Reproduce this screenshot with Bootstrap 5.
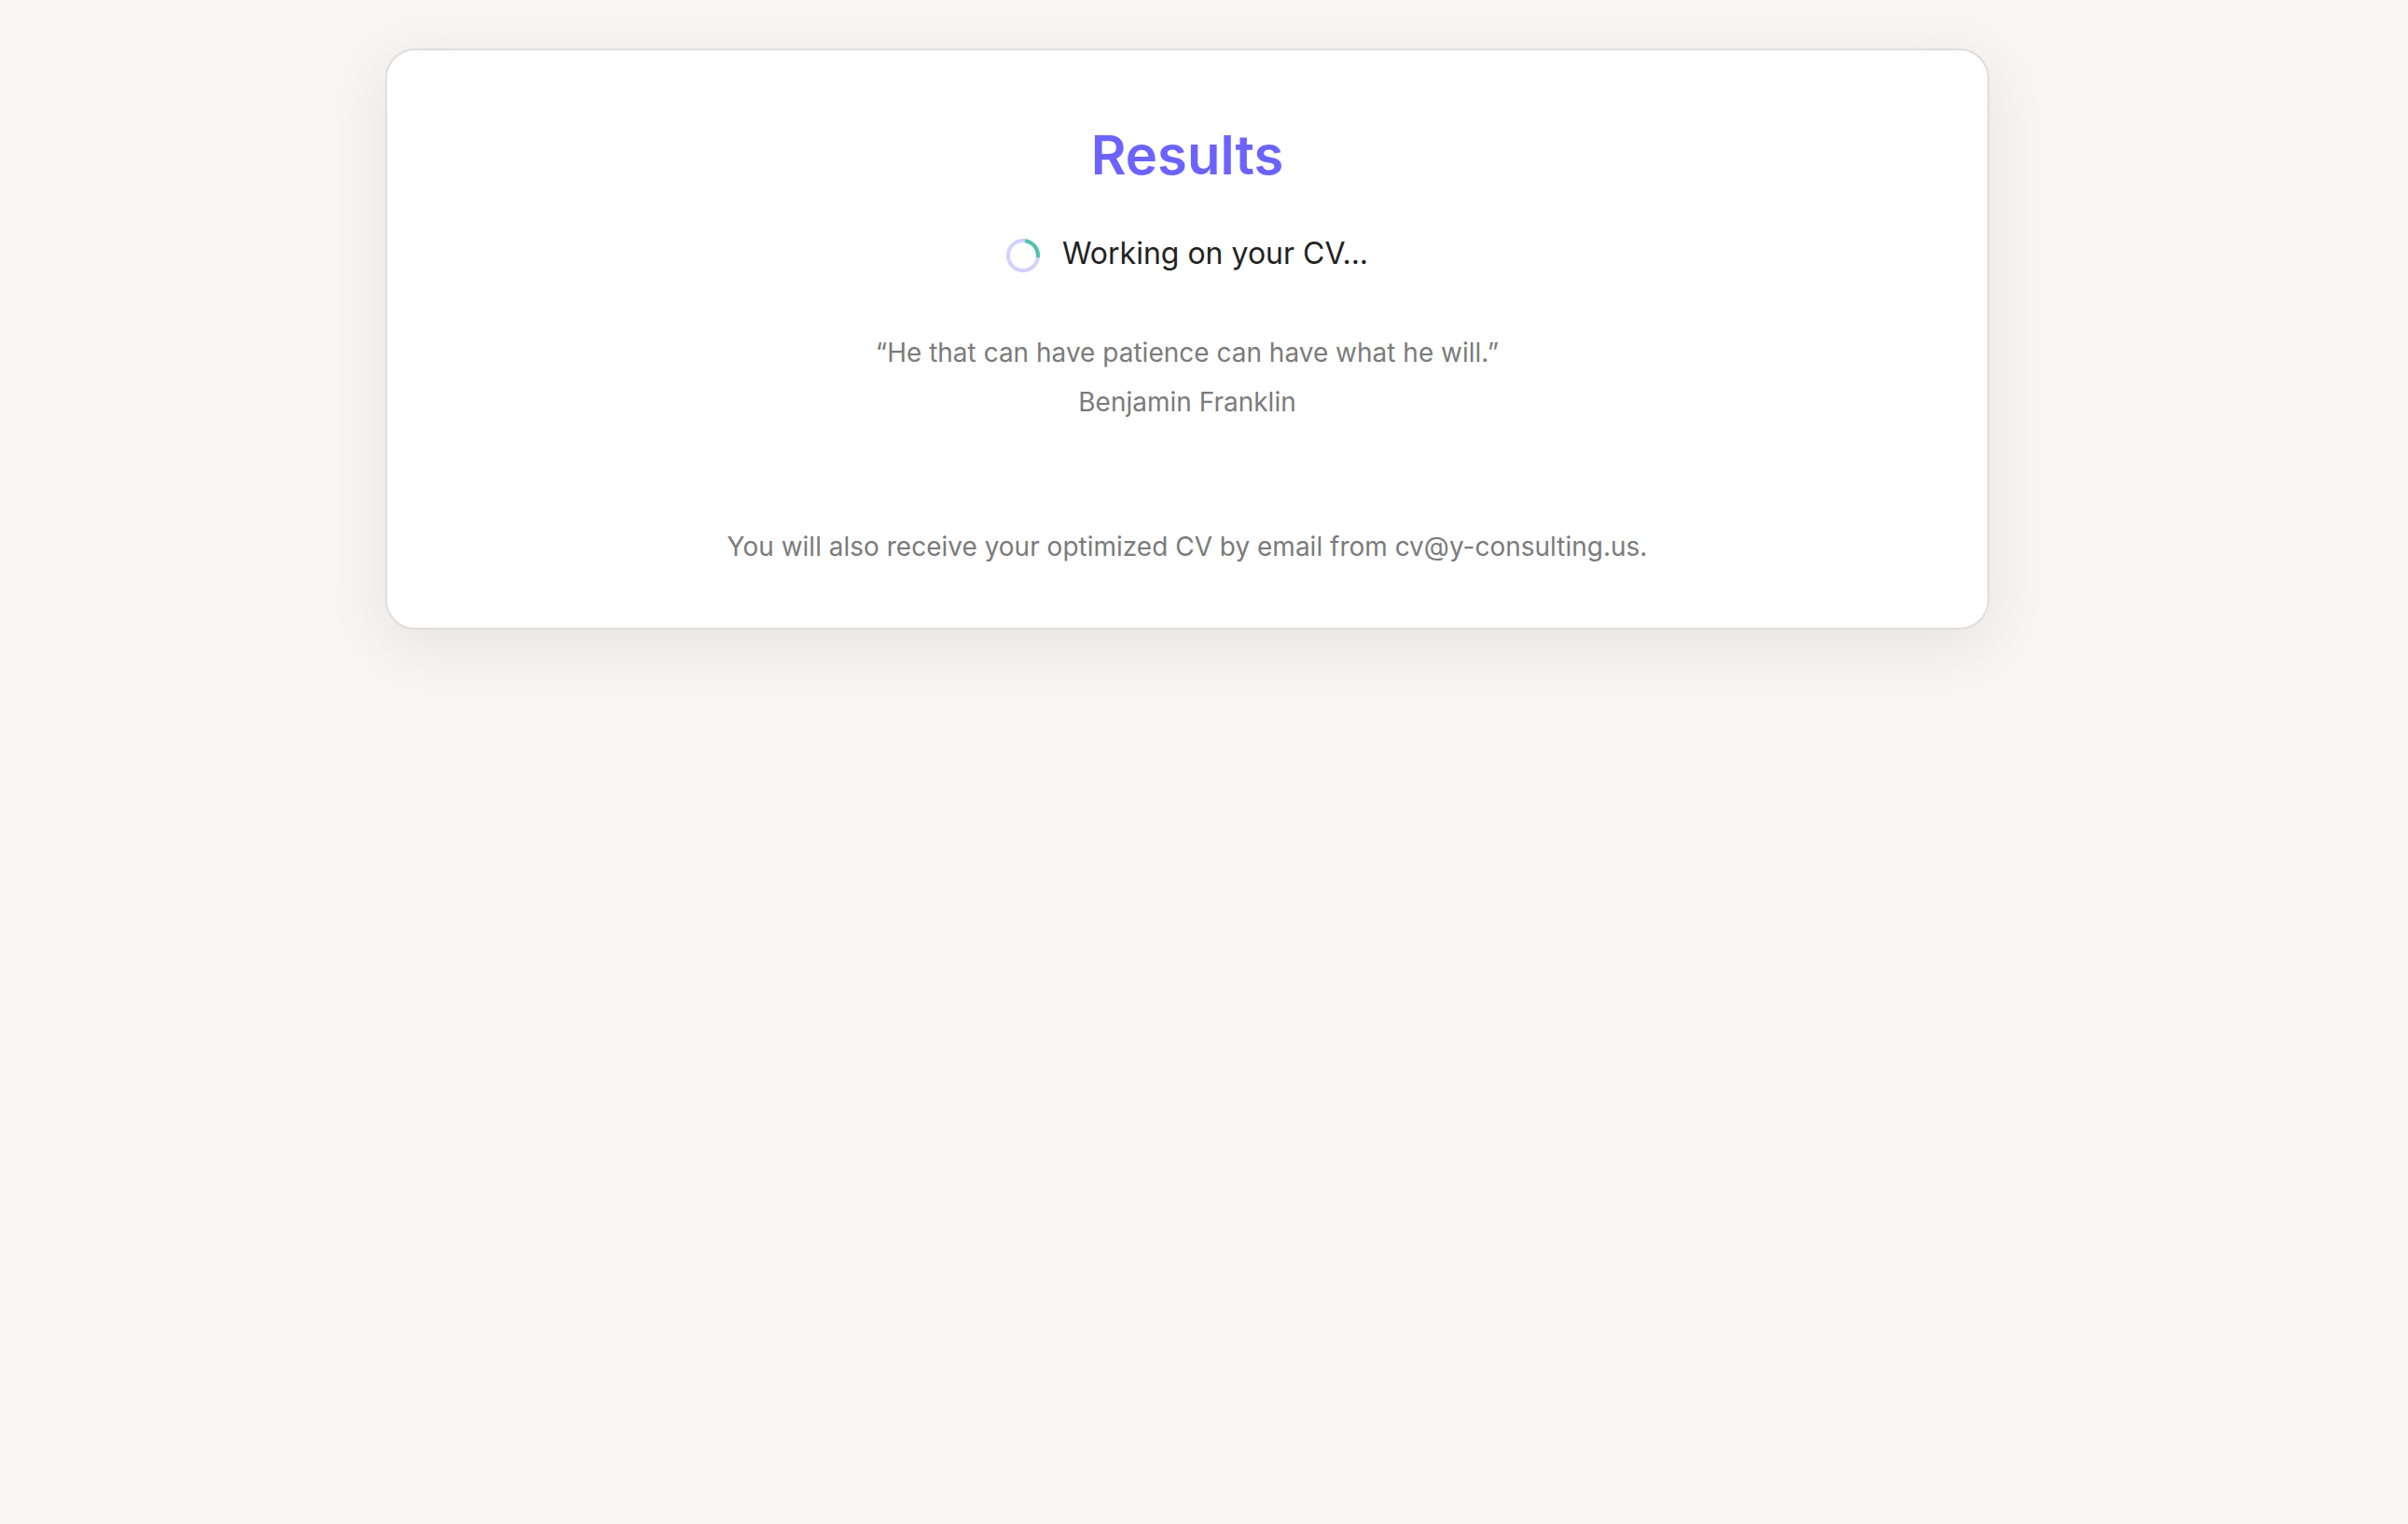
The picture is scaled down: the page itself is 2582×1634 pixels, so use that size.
<!DOCTYPE html>
<html lang="en">
<head>
<meta charset="utf-8">
<meta name="viewport" content="width=device-width, initial-scale=1">
<title>Results</title>
<link href="https://cdn.jsdelivr.net/npm/bootstrap@5.3.0/dist/css/bootstrap.min.css" rel="stylesheet">
<style>
  body {
    background: #f9f5f2;
    color: #222;
    font-family: Inter, "Liberation Sans", sans-serif;
    font-size: 28px;
    line-height: 53px;
    padding: 52px 36px 52px 0;
  }
  .results-card {
    max-width: 1720px;
    padding: 76px 64px 60px;
    border: 2px solid #e0dddb;
    border-radius: 32px;
    box-shadow: 0 16px 64px rgba(0, 0, 0, .08);
  }
  .results-title {
    color: #6c63ff;
    font-size: 58px;
    font-weight: 600;
    line-height: 72px;
    margin-bottom: 44px;
  }
  .status-line {
    font-size: 32px;
    line-height: 52px;
    gap: 24px;
    margin-bottom: 54px;
  }
  .status-ring { width: 36px; height: 36px; margin-top: 4px; }
  .soft-text { color: #7b7b7b; }
  .quote-block { margin-bottom: 102px; }
</style>
</head>
<body class="min-vh-100">
<main class="results-card card mx-auto text-center">
  <h1 class="results-title">Results</h1>
  <div class="status-line d-flex justify-content-center align-items-center" role="status">
    <svg class="status-ring" viewBox="0 0 36 36" fill="none" stroke-width="4" aria-hidden="true">
      <circle cx="18" cy="18" r="16" stroke="#d3d0ff"/>
      <path d="M20.2 2.15A16 16 0 0 1 33.87 20" stroke="#52c1ae"/>
    </svg>
    <span>Working on your CV...</span>
  </div>
  <figure class="quote-block soft-text">
    <blockquote class="mb-0">“He that can have patience can have what he will.”</blockquote>
    <figcaption>Benjamin Franklin</figcaption>
  </figure>
  <p class="soft-text mb-0">You will also receive your optimized CV by email from cv@y-consulting.us.</p>
</main>
<script src="https://cdn.jsdelivr.net/npm/bootstrap@5.3.0/dist/js/bootstrap.bundle.min.js"></script>
</body>
</html>
